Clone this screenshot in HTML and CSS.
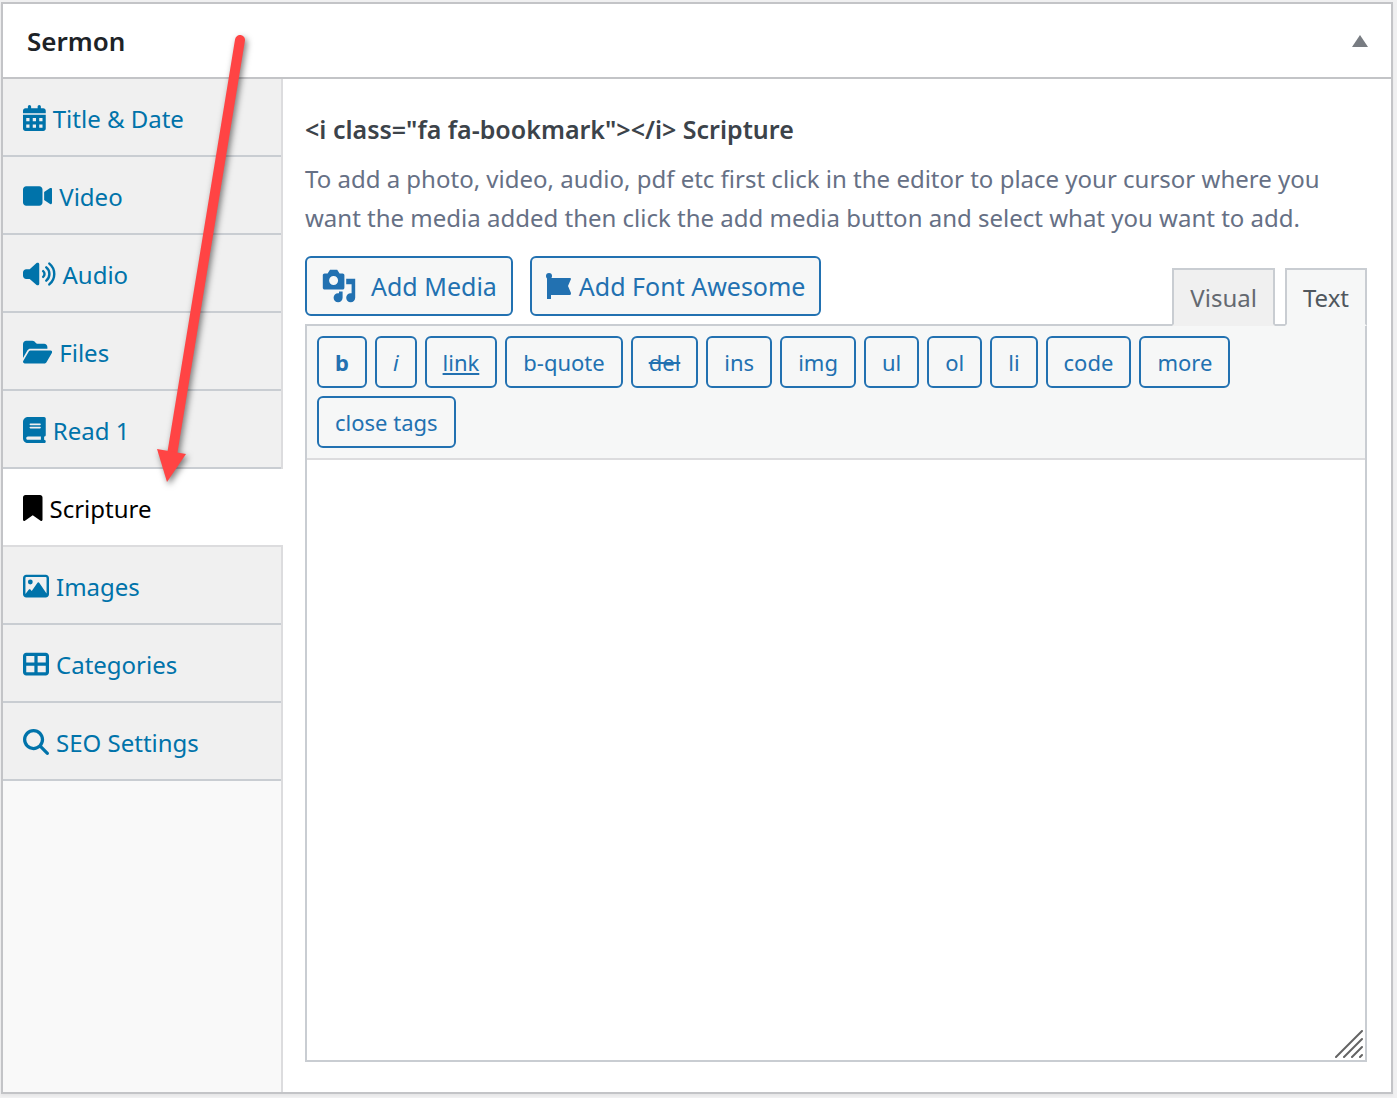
FILE: index.html
```html
<!DOCTYPE html>
<html lang="en">
<head>
	<meta charset="utf-8">
	<title>Sermon</title>
	<link rel="stylesheet" href="styles.css">
</head>
<body>
	<div class="postbox">
		<div class="postbox-header">
			<h2>Sermon</h2>
			<button type="button" class="toggle" aria-label="Toggle panel">
				<svg width="16" height="12" viewBox="0 0 16 12"><path d="M8 0l8 12H0z"/></svg>
			</button>
		</div>

		<div class="inside">
			<!-- left tabs -->
			<nav class="sidebar">
				<ul class="tabs">
					<li><a href="#title">
						<svg class="icon" viewBox="0 0 448 512"><path fill-rule="evenodd" d="M128 0c17.700 0 32 14.300 32 32v32h128V32c0-17.700 14.300-32 32-32s32 14.300 32 32v32h48c26.500 0 48 21.500 48 48v48H0v-48c0-26.500 21.500-48 48-48h48V32c0-17.700 14.300-32 32-32zM0 192h448v272c0 26.500-21.500 48-48 48H48c-26.500 0-48-21.500-48-48zM64 256v64h64v-64zM192 256v64h64v-64zM320 256v64h64v-64zM64 384v64h64v-64zM192 384v64h64v-64zM320 384v64h64v-64z"/></svg>
						Title &amp; Date</a></li>
					<li><a href="#video">
						<svg class="icon" viewBox="0 0 576 512"><path d="M0 128C0 92.700 28.700 64 64 64H320c35.300 0 64 28.700 64 64V384c0 35.300-28.700 64-64 64H64c-35.300 0-64-28.700-64-64V128zM559.100 99.800c10.400 5.600 16.900 16.400 16.900 28.200V384c0 11.800-6.500 22.600-16.900 28.200s-23 5-32.900-1.600l-96-64L416 337.100V174.900l14.200-9.500 96-64c9.800-6.500 22.400-7.200 32.900-1.600z"/></svg>
						Video</a></li>
					<li><a href="#audio">
						<svg class="icon" viewBox="0 0 640 512"><path d="M301 35c11.600 5 19 16.400 19 29v384c0 12.600-7.400 24-19 29s-25 3-34.300-5L131.800 352H64c-35.300 0-64-28.700-64-64v-64c0-35.300 28.700-64 64-64h67.800L266.700 40c9.300-8.300 22.900-10.400 34.300-5z"/><g class="wave"><path d="M397 200a72 72 0 0 1 0 112M458 126a168 168 0 0 1 0 260M518 51a264 264 0 0 1 0 410"/></g></svg>
						Audio</a></li>
					<li><a href="#files">
						<svg class="icon" viewBox="0 0 576 512"><path d="M88.700 223.800L0 375.800V96C0 60.700 28.700 32 64 32H181.500c17 0 33.300 6.700 45.300 18.700l26.500 26.500c12 12 28.300 18.700 45.300 18.700H416c35.300 0 64 28.700 64 64v32H144c-22.800 0-43.800 12.100-55.300 31.800zm27.600 16.100C122.100 230 132.600 224 144 224H544c11.500 0 22 6.100 27.700 16.100s5.700 22.200-.1 32.100l-112 192C453.900 474 443.400 480 432 480H32c-11.500 0-22-6.100-27.700-16.100s-5.700-22.200.1-32.100l112-192z"/></svg>
						Files</a></li>
					<li><a href="#read">
						<svg class="icon" viewBox="0 0 448 512"><path fill-rule="evenodd" d="M96 0C43 0 0 43 0 96V416c0 53 43 96 96 96H416c17.700 0 32-14.300 32-32s-14.300-32-32-32V384c17.700 0 32-14.300 32-32V32c0-17.700-14.300-32-32-32H96zm0 384H352v64H96c-17.700 0-32-14.300-32-32s14.300-32 32-32zm32-240c0-8.800 7.200-16 16-16H336c8.800 0 16 7.200 16 16s-7.200 16-16 16H144c-8.800 0-16-7.200-16-16zm16 48H336c8.800 0 16 7.200 16 16s-7.200 16-16 16H144c-8.800 0-16-7.200-16-16s7.200-16 16-16z"/></svg>
						Read 1</a></li>
					<li class="active"><a href="#scripture">
						<svg class="icon" viewBox="0 0 384 512"><path d="M0 48V487.700C0 501.100 10.900 512 24.300 512c5 0 9.900-1.500 14-4.400L192 400 345.700 507.600c4.100 2.900 9 4.400 14 4.400 13.400 0 24.300-10.900 24.300-24.300V48c0-26.500-21.500-48-48-48H48C21.500 0 0 21.500 0 48z"/></svg>
						Scripture</a></li>
					<li><a href="#images">
						<svg class="icon" viewBox="0 0 512 512"><path fill-rule="evenodd" d="M64 32h384c35 0 64 29 64 64v320c0 35-29 64-64 64H64c-35 0-64-29-64-64V96c0-35 29-64 64-64zm0 48c-9 0-16 7-16 16v316l64-83c10-12 28-12 38 0l22 27 110-161c10-14 30-14 40 0l142 208V96c0-9-7-16-16-16z"/><circle cx="144" cy="176" r="48"/></svg>
						Images</a></li>
					<li><a href="#categories">
						<svg class="icon" viewBox="0 0 512 512"><path fill-rule="evenodd" d="M64 32h384c35 0 64 29 64 64v320c0 35-29 64-64 64H64c-35 0-64-29-64-64V96c0-35 29-64 64-64zM64 96v128h160V96zM288 96v128h160V96zM64 288v128h160V288zM288 288v128h160V288z"/></svg>
						Categories</a></li>
					<li><a href="#seo">
						<svg class="icon" viewBox="0 0 512 512"><path d="M416 208c0 45.900-14.900 88.300-40 122.700L502.600 457.400c12.500 12.500 12.500 32.800 0 45.300s-32.800 12.500-45.300 0L330.700 376c-34.400 25.200-76.800 40-122.700 40C93.100 416 0 322.900 0 208S93.100 0 208 0S416 93.100 416 208zM208 352a144 144 0 1 0 0-288 144 144 0 1 0 0 288z"/></svg>
						SEO Settings</a></li>
				</ul>
			</nav>

			<!-- editor -->
			<div class="content">
				<label class="field-label" for="scripture">&lt;i class="fa fa-bookmark"&gt;&lt;/i&gt; Scripture</label>
				<p class="description">To add a photo, video, audio, pdf etc first click in the editor to place your cursor where you want the media added then click the add media button and select what you want to add.</p>

				<div class="editor-tools">
					<div class="media-buttons">
						<button type="button" class="button add-media">
							<svg width="36" height="36" viewBox="0 0 20 20"><path d="M13 11V4c0-.55-.45-1-1-1h-1.670L9 1H5L3.670 3H2c-.55 0-1 .45-1 1v7c0 .55.45 1 1 1h10c.55 0 1-.45 1-1zM7 4.500c1.380 0 2.500 1.120 2.500 2.500S8.380 9.500 7 9.500 4.500 8.380 4.500 7 5.620 4.500 7 4.500zM14 6h5v10.500c0 1.380-1.120 2.500-2.500 2.500S14 17.880 14 16.500s1.120-2.500 2.500-2.500c.17 0 .34.02.5.05V9h-3V6zm-4 8.050V13h2v3.500c0 1.380-1.120 2.500-2.500 2.500S7 17.880 7 16.500 8.120 14 9.500 14c.17 0 .34.02.5.05z"/></svg>
							Add Media
						</button>
						<button type="button" class="button add-fa">
							<svg width="26" height="26" viewBox="0 0 26 26"><circle cx="3" cy="3" r="3"/><path d="M1 3h4v2h19c1 0 1 1 1 1l-3 7 3 7s0 2-1 2H5v4H1z"/></svg>
							Add Font Awesome
						</button>
					</div>
					<div class="editor-tabs">
						<button type="button" class="switch">Visual</button>
						<button type="button" class="switch current">Text</button>
					</div>
				</div>

				<div class="editor">
					<div class="toolbar">
						<button type="button" class="tag bold">b</button>
						<button type="button" class="tag italic">i</button>
						<button type="button" class="tag link">link</button>
						<button type="button" class="tag">b-quote</button>
						<button type="button" class="tag del">del</button>
						<button type="button" class="tag">ins</button>
						<button type="button" class="tag">img</button>
						<button type="button" class="tag">ul</button>
						<button type="button" class="tag">ol</button>
						<button type="button" class="tag">li</button>
						<button type="button" class="tag">code</button>
						<button type="button" class="tag">more</button>
						<button type="button" class="tag">close tags</button>
					</div>
					<textarea id="scripture"></textarea>
					<svg class="grip" width="28" height="28" viewBox="0 0 28 28"><path d="M1 27L27 1M9 27L27 9M17 27L27 17M25 27L27 25"/></svg>
				</div>
			</div>
		</div>
	</div>

	<!-- arrow pointing at the Scripture tab -->
	<svg class="arrow" width="110" height="470" viewBox="0 0 110 470">
		<path class="shaft" d="M90 20L22 435"/>
		<path class="head" d="M7 429L36 434L17 462z"/>
	</svg>
</body>
</html>
```
FILE: styles.css
```css
* {
	box-sizing: border-box;
}
body {
	margin: 0;
	padding: 2px 4px 4px 1px;
	background: #f0f0f1;
	color: #3c434a;
	font-family: "Noto Sans", "Open Sans", sans-serif;
	font-size: 24px;
}
button {
	font: inherit;
	cursor: pointer;
}
svg {
	fill: currentColor;
	flex: none;
}
.postbox {
	background: #fff;
	border: 2px solid #c3c4c7;
	box-shadow: 0 2px 2px rgba(0,0,0,0.04);
}
.postbox-header {
	display: flex;
	align-items: center;
	justify-content: space-between;
	height: 75px;
	padding: 0 23px 0 24px;
	border-bottom: 2px solid #c3c4c7;
}
.postbox-header h2 {
	margin: 0;
	font-size: 26px;
	font-weight: 600;
	color: #1d2327;
}
.toggle {
	display: flex;
	padding: 0;
	border: none;
	background: none;
	color: #787c82;
}
.inside {
	display: flex;
}

/* tabs */
.sidebar {
	flex: 0 0 280px;
	background: #f9f9f9;
	border-right: 2px solid #dcdcde;
}
.tabs {
	margin: 0;
	padding: 0;
	list-style: none;
}
.tabs li {
	border-bottom: 2px solid #c9cdd2;
	background: #f0f0f0;
}
.tabs a {
	display: flex;
	align-items: center;
	gap: 7px;
	height: 76px;
	padding: 2px 20px 0;
	color: #0073aa;
	text-decoration: none;
}
.tabs .active {
	margin-right: -2px;
	background: #fff;
	border-color: #dcdcde;
}
.tabs .active a {
	color: #000;
}
.icon {
	height: 26px;
}
.wave {
	fill: none;
	stroke: currentColor;
	stroke-width: 48;
	stroke-linecap: round;
}

/* content */
.content {
	flex: 1;
	min-width: 0;
	padding: 32px 24px 30px 22px;
}
.field-label {
	display: block;
	line-height: 36px;
	font-size: 25px;
	font-weight: 600;
}
.description {
	margin: 12px 0 19px;
	line-height: 39px;
	color: #667085;
}
.editor-tools {
	display: flex;
	justify-content: space-between;
	align-items: flex-start;
}
.media-buttons {
	display: flex;
	gap: 17px;
	margin-bottom: 8px;
}
.button {
	display: flex;
	align-items: center;
	height: 60px;
	padding: 0 14px;
	border: 2px solid #2271b1;
	border-radius: 6px;
	background: #f6f7f7;
	color: #2271b1;
	font-size: 25px;
}
.add-media {
	gap: 14px;
}
.add-fa {
	gap: 7px;
}
.editor-tabs {
	display: flex;
	align-self: flex-end;
	gap: 10px;
}
.switch {
	position: relative;
	z-index: 1;
	height: 58px;
	margin-bottom: -2px;
	padding: 0 16px;
	border: 2px solid #c9cdd2;
	border-bottom-color: #f0f0f0;
	background: #f0f0f0;
	color: #646970;
}
.switch.current {
	background: #f6f7f7;
	border-bottom-color: #f6f7f7;
	color: #50575e;
}
.editor {
	position: relative;
	border: 2px solid #c9cdd2;
}
.toolbar {
	display: flex;
	flex-wrap: wrap;
	gap: 8px;
	padding: 10px;
	background: #f6f7f7;
	border-bottom: 2px solid #dcdcde;
}
.tag {
	height: 52px;
	padding: 0 16px;
	border: 2px solid #2271b1;
	border-radius: 6px;
	background: #f6f7f7;
	color: #2271b1;
	font-size: 22px;
}
.bold {
	font-weight: 700;
}
.italic {
	font-style: italic;
}
.link {
	text-decoration: underline;
}
.del {
	text-decoration: line-through;
}
textarea {
	display: block;
	width: 100%;
	height: 600px;
	padding: 20px;
	border: none;
	outline: none;
	resize: none;
	font: inherit;
}
.grip {
	position: absolute;
	right: 2px;
	bottom: 2px;
	fill: none;
	stroke: #646464;
	stroke-width: 2;
	stroke-linecap: round;
	pointer-events: none;
}

/* arrow */
.arrow {
	position: absolute;
	left: 150px;
	top: 20px;
	pointer-events: none;
	filter: drop-shadow(2px 3px 3px rgba(0,0,0,0.5));
}
.shaft {
	stroke: #ff4444;
	stroke-width: 10;
	stroke-linecap: round;
}
.head {
	fill: #ff4444;
}
```
